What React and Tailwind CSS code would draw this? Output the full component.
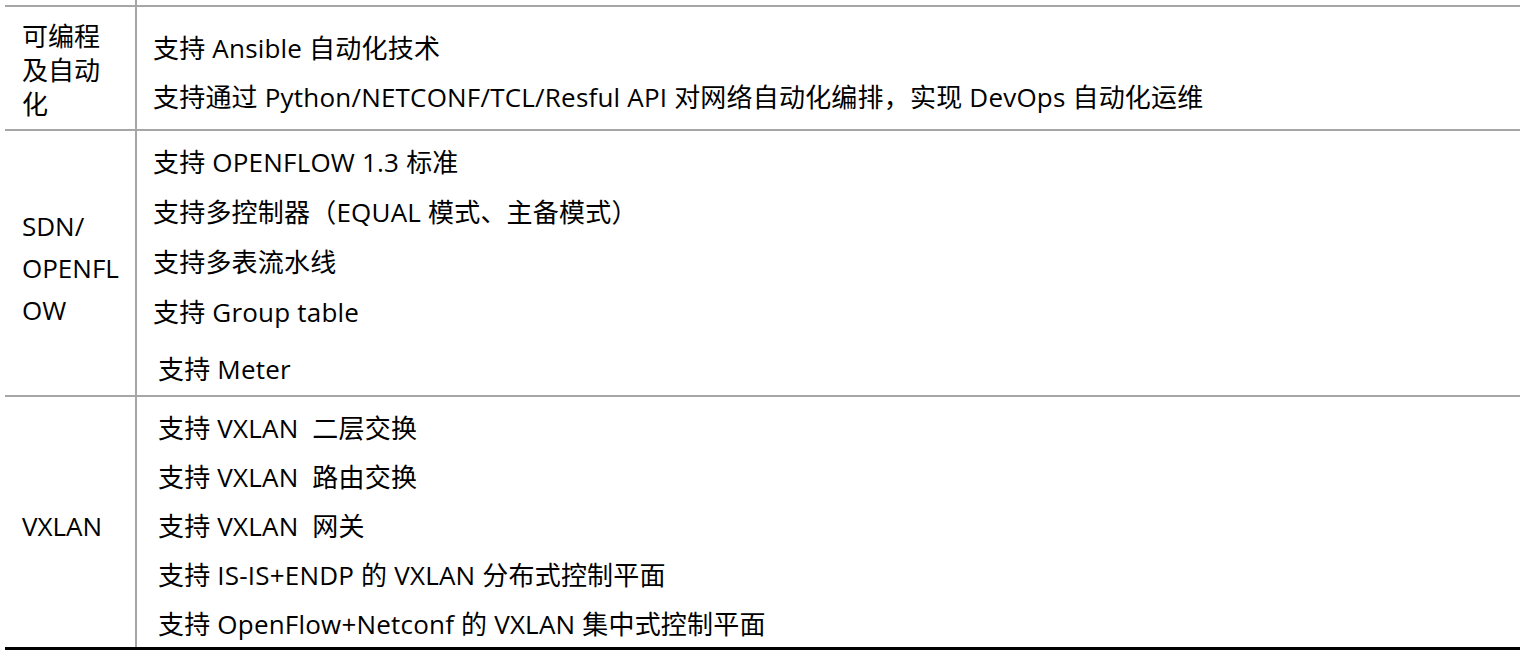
const rows = [
  {
    label: ["可编程", "及自动", "化"],
    labelClass: "pt-[12px] leading-[34px]",
    rowClass: "h-[124px]",
    bodyClass: "pl-[16px] pt-[17px] leading-[49px]",
    lines: [
      { text: "支持 Ansible 自动化技术" },
      { text: "支持通过 Python/NETCONF/TCL/Resful API 对网络自动化编排，实现 DevOps 自动化运维" },
    ],
  },
  {
    label: ["SDN/", "OPENFL", "OW"],
    labelClass: "pt-[74px] leading-[42px]",
    rowClass: "h-[266px]",
    bodyClass: "pl-[16px] pt-[6px] leading-[50px]",
    lines: [
      { text: "支持 OPENFLOW 1.3 标准" },
      { text: "支持多控制器（EQUAL 模式、主备模式）" },
      { text: "支持多表流水线" },
      { text: "支持 Group table" },
      { text: "支持 Meter", cls: "mt-[7px] pl-[5px]" },
    ],
  },
  {
    label: ["VXLAN"],
    labelClass: "pt-[114px] leading-[30px]",
    rowClass: "h-[255px] border-b-[3px] border-b-black",
    bodyClass: "pl-[21px] pt-[7px] leading-[49px]",
    lines: [
      { text: "支持 VXLAN  二层交换" },
      { text: "支持 VXLAN  路由交换" },
      { text: "支持 VXLAN  网关" },
      { text: "支持 IS-IS+ENDP 的 VXLAN 分布式控制平面" },
      { text: "支持 OpenFlow+Netconf 的 VXLAN 集中式控制平面" },
    ],
  },
];

export default function App() {
  return (
    <div
      className="w-[1526px] h-[655px] bg-white text-black text-[26px] overflow-hidden"
      style={{ fontFamily: '"Open Sans", "Noto Sans CJK SC", sans-serif' }}
    >
      <div className="ml-[5px] w-[1515px]">
        {/* stub of the table continuing from above */}
        <div className="flex h-[5px]">
          <div className="w-[132px] border-r-2 border-[#a6a6a6]" />
        </div>
        {rows.map((row, i) => (
          <div key={i} className={`flex border-t-2 border-t-[#a6a6a6] ${row.rowClass}`}>
            <div className={`w-[132px] shrink-0 border-r-2 border-[#a6a6a6] pl-[17px] ${row.labelClass}`}>
              {row.label.map((l) => (
                <div key={l}>{l}</div>
              ))}
            </div>
            <div className={`flex-1 whitespace-pre tracking-[0.2px] ${row.bodyClass}`}>
              {row.lines.map((ln) => (
                <div key={ln.text} className={ln.cls}>
                  {ln.text}
                </div>
              ))}
            </div>
          </div>
        ))}
      </div>
    </div>
  );
}
